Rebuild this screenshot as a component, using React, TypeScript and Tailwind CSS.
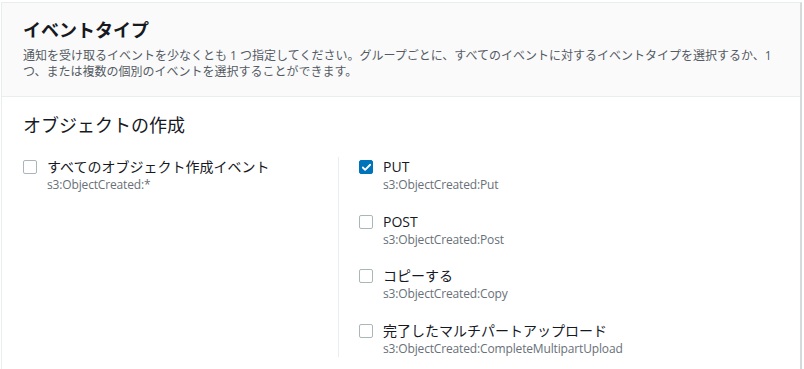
import { Check } from 'lucide-react';

interface EventOption {
  label: string;
  api: string;
  checked?: boolean;
}

const rightOptions: EventOption[] = [
  { label: 'PUT', api: 's3:ObjectCreated:Put', checked: true },
  { label: 'POST', api: 's3:ObjectCreated:Post' },
  { label: 'コピーする', api: 's3:ObjectCreated:Copy' },
  { label: '完了したマルチパートアップロード', api: 's3:ObjectCreated:CompleteMultipartUpload' },
];

function EventCheckbox({ label, api, checked }: EventOption) {
  return (
    <label className="flex items-start gap-[10px]">
      <span
        className={`mt-[3px] w-[14px] h-[14px] flex-shrink-0 rounded-[2px] flex items-center justify-center ${
          checked ? 'bg-[#0073bb] border border-[#0073bb]' : 'bg-white border border-[#aab7b8]'
        }`}
      >
        {checked && <Check className="w-[11px] h-[11px] text-white" strokeWidth={4} />}
      </span>
      <span className="flex flex-col">
        <span className="text-[14px] leading-[20px] text-[#16191f]">{label}</span>
        <span className="text-[12px] leading-[16px] tracking-[-0.15px] text-[#687078]">{api}</span>
      </span>
    </label>
  );
}

export default function App() {
  return (
    <div
      className="w-[804px] h-[369px] bg-white overflow-hidden pt-[2px] pl-[1px]"
      style={{ fontFamily: '"Open Sans", "Noto Sans CJK JP", sans-serif' }}
    >
      <div className="w-[801px] border-t border-l border-[#eaeded] border-r-2 border-r-[#d5dbdb] min-h-[400px]">
        {/* Header */}
        <div className="bg-[#fafafa] border-b border-[#eaeded] px-[21px] pt-[14px] h-[94px]">
          <h2 className="text-[18px] leading-[26px] font-bold text-[#16191f]">イベントタイプ</h2>
          <p className="mt-[5px] text-[12px] leading-[16px] text-[#545b64]">
            通知を受け取るイベントを少なくとも 1 つ指定してください。グループごとに、すべてのイベントに対するイベントタイプを選択するか、1
            つ、または複数の個別のイベントを選択することができます。
          </p>
        </div>

        {/* Body */}
        <div className="px-[21px] pt-[15px]">
          <h3 className="text-[18px] leading-[26px] text-[#16191f]">オブジェクトの作成</h3>
          <div className="grid grid-cols-[316px_1fr] mt-[19px]">
            <div className="border-r border-[#eaeded]">
              <EventCheckbox label="すべてのオブジェクト作成イベント" api="s3:ObjectCreated:*" />
            </div>
            <div className="pl-[20px] flex flex-col gap-[18.5px]">
              {rightOptions.map((o) => (
                <EventCheckbox key={o.api} {...o} />
              ))}
            </div>
          </div>
        </div>
      </div>
    </div>
  );
}
